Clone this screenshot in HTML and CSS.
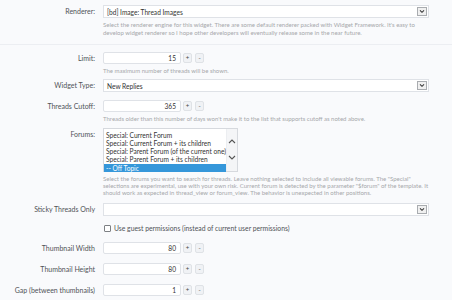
FILE: index.html
```html
<!DOCTYPE html>
<html>
<head>
<meta charset="utf-8">
<link rel="stylesheet" href="styles.css">
</head>
<body>
<div class="form">
  <div class="row r-renderer">
    <div class="lbl">Renderer:</div>
    <div class="ctl">
      <div class="select"><span class="val">[bd] Image: Thread Images</span><span class="arrow"><svg viewBox="0 0 10 8" width="10" height="8"><polyline points="2.5,2.5 5,5 7.5,2.5" fill="none" stroke="#333" stroke-width="1.3"/></svg></span></div>
      <p class="desc">Select the renderer engine for this widget. There are some default renderer packed with Widget Framework. It's easy to<br>develop widget renderer so I hope other developers will eventually release some in the near future.</p>
    </div>
  </div>
  <div class="sep"></div>

  <div class="row r-limit">
    <div class="lbl">Limit:</div>
    <div class="ctl">
      <div class="spin"><div class="num">15</div><span class="btn">+</span><span class="btn">-</span></div>
      <p class="desc">The maximum number of threads will be shown.</p>
    </div>
  </div>

  <div class="row r-type">
    <div class="lbl">Widget Type:</div>
    <div class="ctl">
      <div class="select"><span class="val">New Replies</span><span class="arrow"><svg viewBox="0 0 10 8" width="10" height="8"><polyline points="2.5,2.5 5,5 7.5,2.5" fill="none" stroke="#333" stroke-width="1.3"/></svg></span></div>
    </div>
  </div>

  <div class="row r-cutoff">
    <div class="lbl">Threads Cutoff:</div>
    <div class="ctl">
      <div class="spin"><div class="num">365</div><span class="btn">+</span><span class="btn">-</span></div>
      <p class="desc d-cut">Threads older than this number of days won't make it to the list that supports cutoff as noted above.</p>
    </div>
  </div>

  <div class="row r-forums">
    <div class="lbl">Forums:</div>
    <div class="ctl">
      <div class="listbox">
        <div class="opts">
          <div class="opt">Special: Current Forum</div>
          <div class="opt">Special: Current Forum + its children</div>
          <div class="opt">Special: Parent Forum (of the current one)</div>
          <div class="opt">Special: Parent Forum + its children</div>
          <div class="opt sel">-- Off Topic</div>
        </div>
        <div class="sbar">
          <svg viewBox="0 0 10 8" width="10" height="8"><polyline points="2,6 5,3 8,6" fill="none" stroke="#555" stroke-width="1.1"/></svg>
          <svg viewBox="0 0 10 8" width="10" height="8"><polyline points="2,2 5,5 8,2" fill="none" stroke="#555" stroke-width="1.1"/></svg>
        </div>
      </div>
      <p class="desc d-forums">Select the forums you want to search for threads. Leave nothing selected to include all viewable forums. The "Special"<br>selections are experimental, use with your own risk. Current forum is detected by the parameter "$forum" of the template. It<br>should work as expected in thread_view or forum_view. The behavior is unexpected in other positions.</p>
    </div>
  </div>

  <div class="row r-sticky">
    <div class="lbl">Sticky Threads Only</div>
    <div class="ctl">
      <div class="select"><span class="val"></span><span class="arrow"><svg viewBox="0 0 10 8" width="10" height="8"><polyline points="2.5,2.5 5,5 7.5,2.5" fill="none" stroke="#333" stroke-width="1.3"/></svg></span></div>
    </div>
  </div>

  <div class="row r-check">
    <div class="lbl"></div>
    <div class="ctl">
      <label class="check"><span class="box"></span>Use guest permissions (instead of current user permissions)</label>
    </div>
  </div>

  <div class="row r-tw">
    <div class="lbl">Thumbnail Width</div>
    <div class="ctl">
      <div class="spin"><div class="num">80</div><span class="btn">+</span><span class="btn">-</span></div>
    </div>
  </div>

  <div class="row r-th">
    <div class="lbl">Thumbnail Height</div>
    <div class="ctl">
      <div class="spin"><div class="num">80</div><span class="btn">+</span><span class="btn">-</span></div>
    </div>
  </div>

  <div class="row r-gap">
    <div class="lbl">Gap (between thumbnails)</div>
    <div class="ctl">
      <div class="spin"><div class="num">1</div><span class="btn">+</span><span class="btn">-</span></div>
    </div>
  </div>
</div>
</body>
</html>
```

FILE: styles.css
```css
html, body {
  margin: 0;
  padding: 0;
  background: #f9fafc;
  font-family: Lato, "Liberation Sans", sans-serif;
  width: 452px;
  height: 300px;
  overflow: hidden;
}
.form {
  padding-top: 5px;
}
.row {
  display: flex;
  align-items: flex-start;
}
.lbl {
  width: 95px;
  flex-shrink: 0;
  text-align: right;
  font-size: 7px;
  color: #505357;
  height: 13px;
  line-height: 13px;
  white-space: nowrap;
}
.ctl {
  margin-left: 8px;
  width: 326px;
}
.select {
  height: 13px;
  box-sizing: border-box;
  border: 1px solid #dfe2e7;
  background: #fff;
  display: flex;
  align-items: center;
  font-size: 6.6px;
  color: #333;
}
.select .val {
  padding-left: 3px;
  flex: 1;
  white-space: nowrap;
}
.arrow {
  width: 10px;
  height: 9px;
  box-sizing: border-box;
  border: 1px solid #a9acb0;
  background: #f0f0f0;
  margin-right: 1px;
  display: flex;
  align-items: center;
  justify-content: center;
}
.arrow svg { display: block; width: 8px; height: 7px; }
.desc {
  margin: 3px 0 0 0;
  font-size: 6px;
  line-height: 7.5px;
  color: #a6a8ab;
  white-space: nowrap;
}
.sep {
  height: 1px;
  background: #eceef2;
  margin-top: 8px;
}
.r-limit { margin-top: 7px; }
.r-type { margin-top: 4.5px; }
.r-cutoff { margin-top: 8px; }
.d-cut { margin-top: 2.5px; }
.r-forums { margin-top: 6px; }
.d-forums { margin-top: 2.5px; line-height: 7.2px; }
.r-sticky { margin-top: 7px; }
.r-check { margin-top: 7px; }
.r-check .lbl { height: 10px; }
.r-tw { margin-top: 9px; }
.r-th { margin-top: 8px; }
.r-gap { margin-top: 8px; }

.spin {
  display: flex;
  align-items: center;
  height: 12px;
}
.num {
  width: 78px;
  height: 12px;
  box-sizing: border-box;
  border: 1px solid #dfe2e7;
  background: #fff;
  border-radius: 2px;
  text-align: right;
  padding-right: 4px;
  font-size: 6.6px;
  line-height: 10px;
  color: #333;
}
.btn {
  width: 9px;
  height: 10px;
  box-sizing: border-box;
  border: 1px solid #dfe2e6;
  border-radius: 2px;
  background: #f0f2f5;
  margin-left: 3px;
  font-size: 6px;
  line-height: 8px;
  text-align: center;
  color: #444;
}
.spin .num + .btn { margin-left: 2px; }

.listbox {
  width: 135px;
  height: 44px;
  box-sizing: border-box;
  border: 1px solid #d6d9de;
  background: #fff;
  display: flex;
}
.opts {
  flex: 1;
  padding-top: 1.5px;
}
.opt {
  font-size: 6.6px;
  line-height: 8.3px;
  height: 8.3px;
  padding-left: 2px;
  color: #333;
  white-space: nowrap;
}
.opt.sel {
  background: #3597da;
  color: #fff;
}
.sbar {
  width: 10px;
  background: #f4f5f7;
  border-left: 1px solid #eceef1;
  display: flex;
  flex-direction: column;
  align-items: center;
  padding-top: 8px;
  gap: 9px;
}
.sbar svg { display: block; }

.check {
  display: flex;
  align-items: center;
  height: 10px;
  font-size: 6.8px;
  color: #505357;
  white-space: nowrap;
}
.check .box {
  width: 7px;
  height: 7px;
  box-sizing: border-box;
  border: 1px solid #7d8084;
  border-radius: 1px;
  background: #fff;
  margin-left: 1px;
  margin-right: 3px;
}
```
